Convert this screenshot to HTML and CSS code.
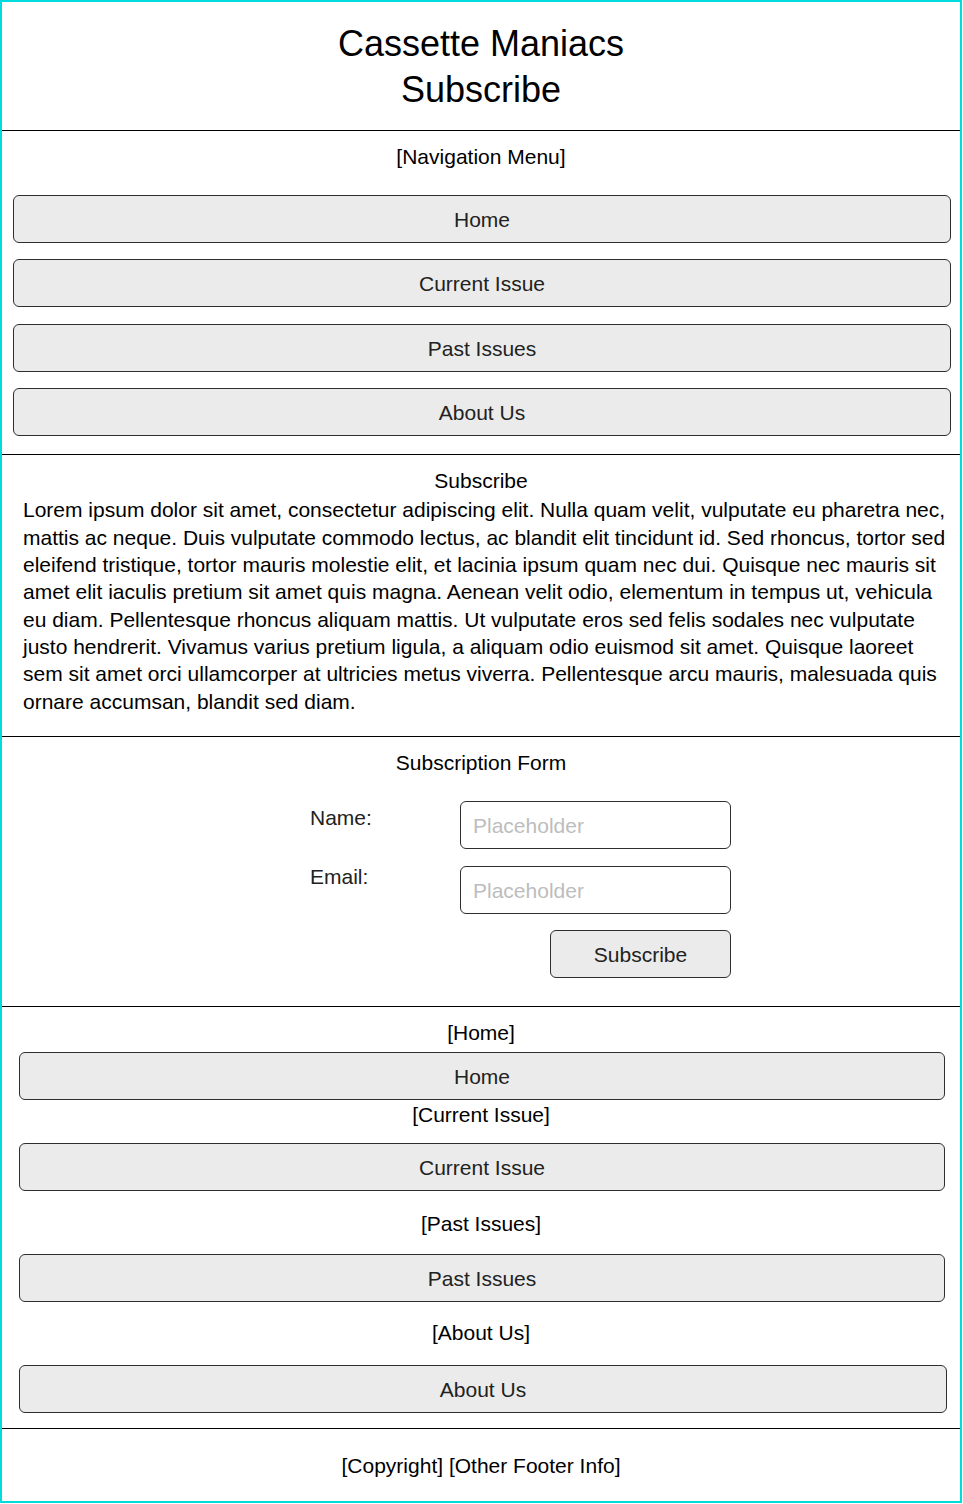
FILE: index.html
```html
<!DOCTYPE html>
<html>
<head>
<meta charset="utf-8">
<title>Cassette Maniacs - Subscribe</title>
<link rel="stylesheet" href="styles.css">
</head>
<body>
<div class="frame">
  <header class="header">
    <div class="title">Cassette Maniacs</div>
    <div class="title">Subscribe</div>
  </header>

  <nav class="section nav">
    <div class="caption">[Navigation Menu]</div>
    <div class="nav-list">
      <div class="btn">Home</div>
      <div class="btn">Current Issue</div>
      <div class="btn">Past Issues</div>
      <div class="btn">About Us</div>
    </div>
  </nav>

  <section class="section intro">
    <div class="caption">Subscribe</div>
    <p class="lorem">Lorem ipsum dolor sit amet, consectetur adipiscing elit. Nulla quam velit, vulputate eu pharetra nec, mattis ac neque. Duis vulputate commodo lectus, ac blandit elit tincidunt id. Sed rhoncus, tortor sed eleifend tristique, tortor mauris molestie elit, et lacinia ipsum quam nec dui. Quisque nec mauris sit amet elit iaculis pretium sit amet quis magna. Aenean velit odio, elementum in tempus ut, vehicula eu diam. Pellentesque rhoncus aliquam mattis. Ut vulputate eros sed felis sodales nec vulputate justo hendrerit. Vivamus varius pretium ligula, a aliquam odio euismod sit amet. Quisque laoreet sem sit amet orci ullamcorper at ultricies metus viverra. Pellentesque arcu mauris, malesuada quis ornare accumsan, blandit sed diam.</p>
  </section>

  <section class="section form-section">
    <div class="caption">Subscription Form</div>
    <div class="form">
      <div class="label label-name">Name:</div>
      <div class="input">Placeholder</div>
      <div class="label label-email">Email:</div>
      <div class="input">Placeholder</div>
      <div class="btn submit">Subscribe</div>
    </div>
  </section>

  <section class="section links">
    <div class="caption">[Home]</div>
    <div class="btn link link-home">Home</div>
    <div class="caption cap-current">[Current Issue]</div>
    <div class="btn link link-current">Current Issue</div>
    <div class="caption cap-past">[Past Issues]</div>
    <div class="btn link link-past">Past Issues</div>
    <div class="caption cap-about">[About Us]</div>
    <div class="btn link link-about">About Us</div>
  </section>

  <footer class="footer">[Copyright] [Other Footer Info]</footer>
</div>
</body>
</html>
```

FILE: styles.css
```css
* { box-sizing: border-box; }

html, body {
  margin: 0;
  padding: 0;
  background: #fff;
}

body {
  font-family: "Liberation Sans", Arial, Helvetica, sans-serif;
  color: #000;
}

.frame {
  width: 962px;
  height: 1503px;
  border: 2px solid #00dcdc;
  display: flex;
  flex-direction: column;
}

.header {
  padding: 19px 0 17px;
  border-bottom: 1px solid #000;
  text-align: center;
}

.title {
  font-size: 36px;
  line-height: 46px;
}

.section {
  border-bottom: 1px solid #000;
  padding-top: 14px;
}

.caption {
  font-size: 21px;
  line-height: 24px;
  text-align: center;
}

.btn {
  height: 48px;
  padding-top: 2px;
  background: #ebebeb;
  border: 1px solid #2e2e2e;
  border-radius: 6px;
  font-size: 21px;
  color: #222;
  display: flex;
  align-items: center;
  justify-content: center;
}

/* navigation */
.nav {
  padding-bottom: 18px;
}

.nav-list {
  margin: 26px 9px 0 11px;
  display: flex;
  flex-direction: column;
  gap: 16.33px;
}

/* intro */
.intro {
  padding-bottom: 21px;
}

.lorem {
  margin: 3.5px 8px 0 21px;
  font-size: 21px;
  line-height: 27.3px;
}

/* form */
.form-section {
  padding-bottom: 28px;
}

.form {
  margin: 26px 0 0 308px;
  width: 421px;
  display: grid;
  grid-template-columns: 150px 271px;
  row-gap: 17px;
}

.label {
  font-size: 21px;
  line-height: 24px;
  color: #222;
}

.label-name { padding-top: 5px; }
.label-email { margin-top: -1px; }

.input {
  height: 48px;
  padding: 2px 0 0 12px;
  border: 1px solid #2e2e2e;
  border-radius: 6px;
  font-size: 21px;
  color: #bdbdbd;
  display: flex;
  align-items: center;
}

.submit {
  grid-column: 2;
  justify-self: end;
  width: 181px;
  margin-top: -1px;
}

/* footer links */
.links {
  padding-bottom: 15px;
}

.link {
  margin: 0 15px 0 17px;
}

.link-home { margin-top: 7px; }
.cap-current { margin-top: 3px; }
.link-current { margin-top: 16px; }
.cap-past { margin-top: 21px; }
.link-past { margin-top: 18px; }
.cap-about { margin-top: 19px; }
.link-about { margin-top: 20px; margin-right: 13px; }

.footer {
  padding-top: 25px;
  font-size: 21px;
  line-height: 24px;
  text-align: center;
}
```
